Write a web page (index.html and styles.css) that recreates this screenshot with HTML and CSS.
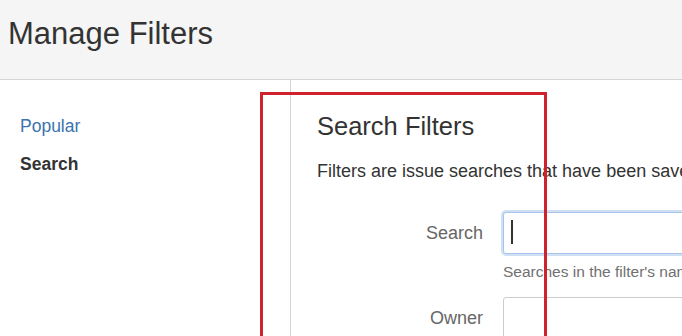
FILE: index.html
```html
<!DOCTYPE html>
<html lang="en">
<head>
  <meta charset="UTF-8" />
  <title>Manage Filters</title>
  <link rel="stylesheet" href="styles.css">
</head>
<body>
  <header class="page-header">
    <h1>Manage Filters</h1>
  </header>

  <div class="layout">
    <nav class="sidebar">
      <ul class="nav">
        <li><a href="#" class="nav-link">Popular</a></li>
        <li class="nav-active">Search</li>
      </ul>
    </nav>

    <main class="content">
      <h2>Search Filters</h2>
      <p class="intro">Filters are issue searches that have been saved for re-use.</p>

      <div class="form">
        <div class="row">
          <label class="label">Search</label>
          <div class="field-col">
            <div class="field field-focus"><span class="caret"></span></div>
            <div class="help">Searches in the filter's name and description.</div>
          </div>
        </div>
        <div class="row">
          <label class="label">Owner</label>
          <div class="field-col">
            <div class="field"></div>
          </div>
        </div>
      </div>
    </main>
  </div>

  <!-- annotation drawn over the screenshot -->
  <div class="highlight"></div>
</body>
</html>
```

FILE: styles.css
```css
body {
  margin: 0;
  background-color: #ffffff;
  color: #333;
  font-family: "Liberation Sans", Arial, sans-serif;
  overflow: hidden;
}

.page-header {
  background-color: #f5f5f5;
  border-bottom: 1px solid #d5d5d5;
  padding: 16px 8px 27px;
}

.page-header h1 {
  margin: 0;
  font-size: 31px;
  font-weight: normal;
  line-height: 36px;
  color: #333;
}

.layout {
  display: flex;
  height: 256px;
}

.sidebar {
  flex: none;
  width: 290px;
  border-right: 1px solid #d5d5d5;
}

.nav {
  list-style: none;
  margin: 0;
  padding: 27px 0 0 20px;
  font-size: 17.5px;
  line-height: 24px;
}

.nav li {
  padding: 7px 0;
}

.nav-link {
  color: #3b73af;
  text-decoration: none;
}

.nav-active {
  font-weight: bold;
  color: #333;
}

.content {
  flex: none;
  width: 760px;
  padding: 31px 0 0 26px;
}

.content h2 {
  margin: 0;
  font-size: 25.5px;
  font-weight: normal;
  line-height: 30px;
  color: #333;
}

.intro {
  margin: 18px 0 0;
  font-size: 18px;
  line-height: 24px;
  white-space: nowrap;
}

.form {
  margin-top: 29px;
}

.row {
  display: grid;
  grid-template-columns: 166px 320px;
  column-gap: 20px;
  align-items: start;
  margin-bottom: 15px;
}

.label {
  text-align: right;
  font-size: 18px;
  line-height: 24px;
  padding-top: 9px;
  color: #666;
}

.field {
  box-sizing: border-box;
  height: 42px;
  border: 1px solid #cccccc;
  border-radius: 3px;
  padding: 7px;
  background-color: #fff;
}

.field-focus {
  border-color: #a9c4ea;
  box-shadow: 0 0 0 2px #cfe0f5;
}

.caret {
  display: block;
  width: 2px;
  height: 24px;
  background-color: #333;
}

.help {
  margin-top: 8px;
  font-size: 15.5px;
  line-height: 20px;
  color: #707070;
  white-space: nowrap;
}

.highlight {
  position: absolute;
  left: 260px;
  top: 92px;
  width: 281px;
  height: 300px;
  border: 3px solid #d0222e;
  pointer-events: none;
}
```
